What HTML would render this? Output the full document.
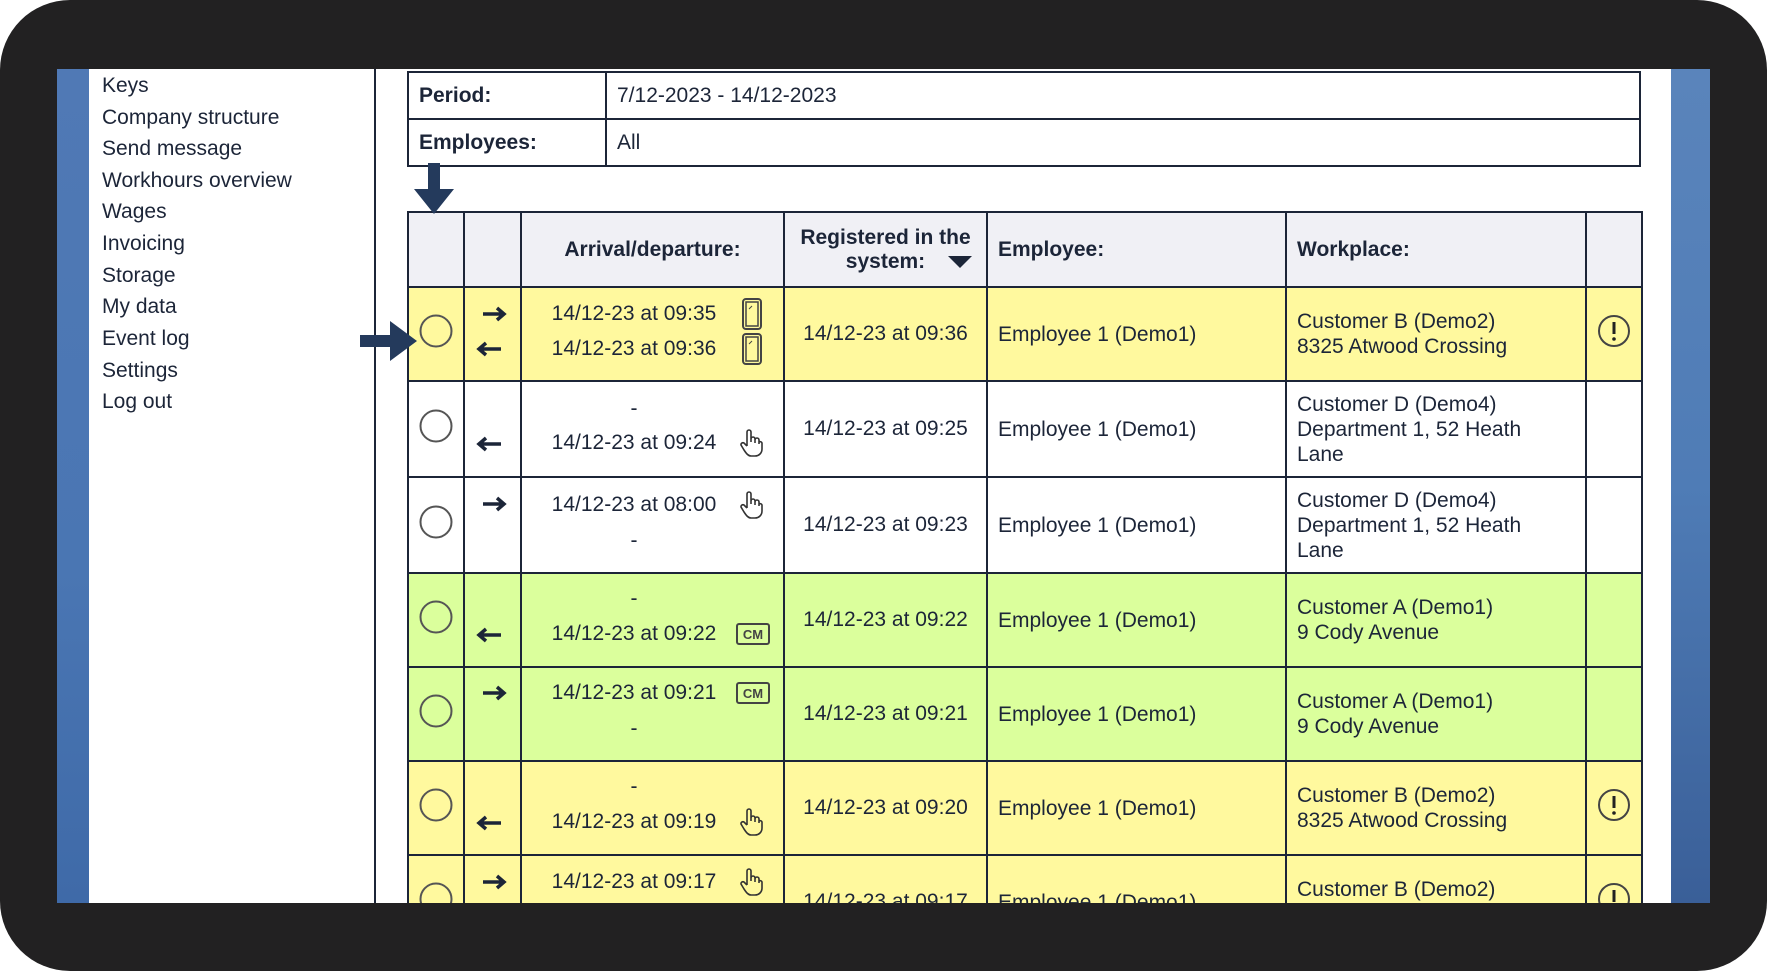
<!DOCTYPE html>
<html><head><meta charset="utf-8"><style>
*{margin:0;padding:0;box-sizing:border-box}
body{width:1767px;height:971px;background:#fff;font-family:"Liberation Sans",Arial,sans-serif;color:#1c2538;overflow:hidden;position:relative}
.frame{position:absolute;left:0;top:0;width:1767px;height:971px;background:#222122;border-radius:70px}
.screen{position:absolute;left:57px;top:69px;width:1653px;height:834px;background:#fff;overflow:hidden}
.bl{position:absolute;left:0;top:0;width:32px;height:834px;background:linear-gradient(#5079b5,#4a76b3 60%,#3f6aa8)}
.br{position:absolute;left:1614px;top:0;width:39px;height:834px;background:linear-gradient(#5a84bb,#4f7cb6 50%,#3a5f98)}
.sb{position:absolute;left:32px;top:0;width:287px;height:834px;border-right:2px solid #1c2538}
.sb div{position:absolute;left:13px;font-size:21px;line-height:24px}
table{border-collapse:collapse;table-layout:fixed;position:absolute}
td{border:2px solid #1c2538;font-size:21px;vertical-align:middle}
.ft{left:350px;top:2px;width:1234px}
.ft td{height:47px;padding-left:10px}
.mt{left:350px;top:142px;width:1234px}
.mt th{border:2px solid #1c2538;background:#f0f0f5;font-size:21px;height:75px;text-align:left;padding-left:10px}
.y td{background:#fff99e}.g td{background:#dbff9c}.w td{background:#fff}
.c{text-align:center}
.ad{position:relative}
.ad .l{position:absolute;left:-3px;width:230px;text-align:center;font-size:21px}
.ad svg{position:absolute}
.p{padding-left:10px;line-height:25px}
</style></head><body>
<div class="frame"></div>
<div class="screen">
<div class="bl"></div><div class="br"></div>
<div class="sb">
<div style="top:5px">Keys</div><div style="top:37px">Company structure</div><div style="top:68px">Send message</div><div style="top:100px">Workhours overview</div><div style="top:131px">Wages</div><div style="top:163px">Invoicing</div><div style="top:195px">Storage</div><div style="top:226px">My data</div><div style="top:258px">Event log</div><div style="top:290px">Settings</div><div style="top:321px">Log out</div>
</div>
<table class="ft"><colgroup><col style="width:198px"><col></colgroup>
<tr><td style="font-weight:bold">Period:</td><td>7/12-2023 - 14/12-2023</td></tr>
<tr><td style="font-weight:bold">Employees:</td><td>All</td></tr></table>

<table class="mt"><colgroup><col style="width:56px"><col style="width:57px"><col style="width:263px"><col style="width:203px"><col style="width:299px"><col style="width:300px"><col style="width:56px"></colgroup>
<tr><th></th><th></th><th style="text-align:center;padding:0">Arrival/departure:</th><th style="text-align:center;padding:0;line-height:24px;position:relative">Registered in the<br>system:<svg width="24" height="12" style="position:absolute;right:14px;top:43px"><path d="M0 0H24L12 12Z" fill="#1c2538"/></svg></th><th>Employee:</th><th>Workplace:</th><th></th></tr>

<tr class="y" style="height:89px"><td class="c"><svg width="36" height="36"><circle cx="18" cy="18" r="15.5" fill="none" stroke="#555" stroke-width="2"/></svg></td>
<td><svg width="53" height="86"><path d="M18 26H38M32 20L39 26L32 32" stroke="#1c2538" stroke-width="3.5" fill="none"/><path d="M36 61H15M21 55L14 61L21 67" stroke="#1c2538" stroke-width="3.5" fill="none"/></svg></td>
<td class="ad"><div class="l" style="top:14px">14/12-23 at 09:35</div><div class="l" style="top:49px">14/12-23 at 09:36</div>
<svg width="22" height="34" style="left:219px;top:9px"><rect x="2" y="2" width="18" height="30" rx="3" fill="none" stroke="#444" stroke-width="2"/><rect x="5" y="5" width="12" height="24" fill="none" stroke="#444" stroke-width="1.5"/><path d="M8 12L11 9" stroke="#444"/></svg>
<svg width="22" height="34" style="left:219px;top:44px"><rect x="2" y="2" width="18" height="30" rx="3" fill="none" stroke="#444" stroke-width="2"/><rect x="5" y="5" width="12" height="24" fill="none" stroke="#444" stroke-width="1.5"/><path d="M8 12L11 9" stroke="#444"/></svg></td>
<td class="c">14/12-23 at 09:36</td><td class="p">Employee 1 (Demo1)</td><td class="p">Customer B (Demo2)<br>8325 Atwood Crossing</td>
<td class="c"><svg width="36" height="36"><circle cx="18" cy="18" r="15" fill="none" stroke="#444" stroke-width="2"/><path d="M18 9V21" stroke="#222" stroke-width="3"/><circle cx="18" cy="26" r="1.8" fill="#222"/></svg></td></tr>

<tr class="w" style="height:92px"><td class="c"><svg width="36" height="36"><circle cx="18" cy="18" r="15.5" fill="none" stroke="#555" stroke-width="2"/></svg></td>
<td><svg width="53" height="88"><path d="M36 62H15M21 56L14 62L21 68" stroke="#1c2538" stroke-width="3.5" fill="none"/></svg></td>
<td class="ad"><div class="l" style="top:15px">-</div><div class="l" style="top:49px">14/12-23 at 09:24</div>
<svg width="26" height="30" style="left:216px;top:46px"><path d="M9 18V4a2 2 0 0 1 4 0v10M13 11a2 2 0 0 1 4 0v4M17 12a2 2 0 0 1 4 0v4M21 14a2 2 0 0 1 3 1v6c0 4-3 7-7 7h-4c-3 0-5-3-7-6L3 17a2 2 0 0 1 3-2l3 3" fill="none" stroke="#333" stroke-width="1.6"/></svg></td>
<td class="c">14/12-23 at 09:25</td><td class="p">Employee 1 (Demo1)</td><td class="p">Customer D (Demo4)<br>Department 1, 52 Heath<br>Lane</td><td></td></tr>

<tr class="w" style="height:92px"><td class="c"><svg width="36" height="36"><circle cx="18" cy="18" r="15.5" fill="none" stroke="#555" stroke-width="2"/></svg></td>
<td><svg width="53" height="88"><path d="M18 26H38M32 20L39 26L32 32" stroke="#1c2538" stroke-width="3.5" fill="none"/></svg></td>
<td class="ad"><div class="l" style="top:15px">14/12-23 at 08:00</div><div class="l" style="top:51px">-</div>
<svg width="26" height="30" style="left:216px;top:12px"><path d="M9 18V4a2 2 0 0 1 4 0v10M13 11a2 2 0 0 1 4 0v4M17 12a2 2 0 0 1 4 0v4M21 14a2 2 0 0 1 3 1v6c0 4-3 7-7 7h-4c-3 0-5-3-7-6L3 17a2 2 0 0 1 3-2l3 3" fill="none" stroke="#333" stroke-width="1.6"/></svg></td>
<td class="c">14/12-23 at 09:23</td><td class="p">Employee 1 (Demo1)</td><td class="p">Customer D (Demo4)<br>Department 1, 52 Heath<br>Lane</td><td></td></tr>

<tr class="g" style="height:88px"><td class="c"><svg width="36" height="36"><circle cx="18" cy="18" r="15.5" fill="none" stroke="#555" stroke-width="2"/></svg></td>
<td><svg width="53" height="86"><path d="M36 61H15M21 55L14 61L21 67" stroke="#1c2538" stroke-width="3.5" fill="none"/></svg></td>
<td class="ad"><div class="l" style="top:13px">-</div><div class="l" style="top:48px">14/12-23 at 09:22</div>
<svg width="34" height="22" style="left:214px;top:49px"><rect x="1" y="1" width="32" height="20" rx="2" fill="none" stroke="#444" stroke-width="2"/><text x="17" y="16" font-size="13" text-anchor="middle" fill="#444" font-family="Liberation Sans" font-weight="bold">CM</text></svg></td>
<td class="c">14/12-23 at 09:22</td><td class="p">Employee 1 (Demo1)</td><td class="p">Customer A (Demo1)<br>9 Cody Avenue</td><td></td></tr>

<tr class="g" style="height:89px"><td class="c"><svg width="36" height="36"><circle cx="18" cy="18" r="15.5" fill="none" stroke="#555" stroke-width="2"/></svg></td>
<td><svg width="53" height="86"><path d="M18 25H38M32 19L39 25L32 31" stroke="#1c2538" stroke-width="3.5" fill="none"/></svg></td>
<td class="ad"><div class="l" style="top:13px">14/12-23 at 09:21</div><div class="l" style="top:49px">-</div>
<svg width="34" height="22" style="left:214px;top:14px"><rect x="1" y="1" width="32" height="20" rx="2" fill="none" stroke="#444" stroke-width="2"/><text x="17" y="16" font-size="13" text-anchor="middle" fill="#444" font-family="Liberation Sans" font-weight="bold">CM</text></svg></td>
<td class="c">14/12-23 at 09:21</td><td class="p">Employee 1 (Demo1)</td><td class="p">Customer A (Demo1)<br>9 Cody Avenue</td><td></td></tr>

<tr class="y" style="height:88px"><td class="c"><svg width="36" height="36"><circle cx="18" cy="18" r="15.5" fill="none" stroke="#555" stroke-width="2"/></svg></td>
<td><svg width="53" height="86"><path d="M36 61H15M21 55L14 61L21 67" stroke="#1c2538" stroke-width="3.5" fill="none"/></svg></td>
<td class="ad"><div class="l" style="top:13px">-</div><div class="l" style="top:48px">14/12-23 at 09:19</div>
<svg width="26" height="30" style="left:216px;top:45px"><path d="M9 18V4a2 2 0 0 1 4 0v10M13 11a2 2 0 0 1 4 0v4M17 12a2 2 0 0 1 4 0v4M21 14a2 2 0 0 1 3 1v6c0 4-3 7-7 7h-4c-3 0-5-3-7-6L3 17a2 2 0 0 1 3-2l3 3" fill="none" stroke="#333" stroke-width="1.6"/></svg></td>
<td class="c">14/12-23 at 09:20</td><td class="p">Employee 1 (Demo1)</td><td class="p">Customer B (Demo2)<br>8325 Atwood Crossing</td>
<td class="c"><svg width="36" height="36"><circle cx="18" cy="18" r="15" fill="none" stroke="#444" stroke-width="2"/><path d="M18 9V21" stroke="#222" stroke-width="3"/><circle cx="18" cy="26" r="1.8" fill="#222"/></svg></td></tr>

<tr class="y" style="height:89px"><td class="c"><svg width="36" height="36"><circle cx="18" cy="18" r="15.5" fill="none" stroke="#555" stroke-width="2"/></svg></td>
<td><svg width="53" height="86"><path d="M18 26H38M32 20L39 26L32 32" stroke="#1c2538" stroke-width="3.5" fill="none"/></svg></td>
<td class="ad"><div class="l" style="top:14px">14/12-23 at 09:17</div><div class="l" style="top:49px">-</div>
<svg width="26" height="30" style="left:216px;top:11px"><path d="M9 18V4a2 2 0 0 1 4 0v10M13 11a2 2 0 0 1 4 0v4M17 12a2 2 0 0 1 4 0v4M21 14a2 2 0 0 1 3 1v6c0 4-3 7-7 7h-4c-3 0-5-3-7-6L3 17a2 2 0 0 1 3-2l3 3" fill="none" stroke="#333" stroke-width="1.6"/></svg></td>
<td class="c">14/12-23 at 09:17</td><td class="p">Employee 1 (Demo1)</td><td class="p">Customer B (Demo2)<br>8325 Atwood Crossing</td>
<td class="c"><svg width="36" height="36"><circle cx="18" cy="18" r="15" fill="none" stroke="#444" stroke-width="2"/><path d="M18 9V21" stroke="#222" stroke-width="3"/><circle cx="18" cy="26" r="1.8" fill="#222"/></svg></td></tr>
</table>
<svg width="60" height="70" style="position:absolute;left:348px;top:94px"><path d="M23 0H35V26H49L29 51L9 26H23Z" fill="#243a5c"/></svg>
<svg width="70" height="60" style="position:absolute;left:303px;top:242px"><path d="M0 24V36H30V50L57 30L30 10V24Z" fill="#243a5c"/></svg>
</div>
</body></html>
